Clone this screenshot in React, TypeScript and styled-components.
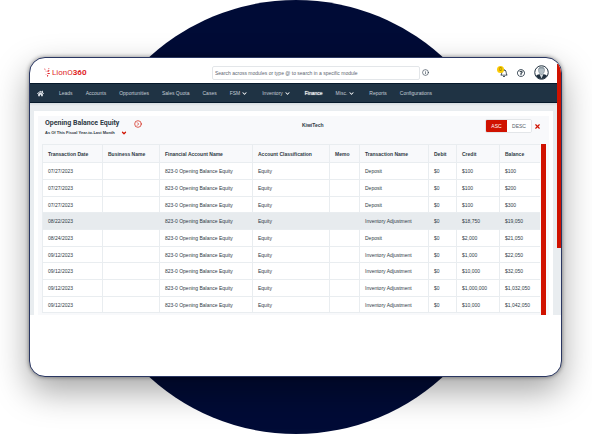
import React from 'react';
import styled, { createGlobalStyle, css } from 'styled-components';
import { FaHome, FaChevronDown, FaRegBell, FaRegQuestionCircle } from 'react-icons/fa';
import { ChevronDown, CircleChevronRight, Info, X } from 'lucide-react';

const red = '#d01200';
const ink = '#2f3a45';
const navy = '#1f3344';
const line = '#e9edf0';

const GlobalStyle = createGlobalStyle`
  *, *::before, *::after { box-sizing: border-box; }
  body {
    margin: 0;
    background: #fff;
    color: ${ink};
    font-family: "Liberation Sans", Arial, sans-serif;
    font-size: 5px;
    line-height: 6px;
  }
  button, input { font: inherit; color: inherit; margin: 0; padding: 0; border: 0; background: none; }
  button { cursor: pointer; }
  a { color: inherit; text-decoration: none; }
  svg { display: block; flex: none; }
`;

const Stage = styled.div`
  position: relative;
  display: flex;
  min-height: 100vh;
  padding: 57px 30px 57px 29px;
  overflow: hidden;

  &::before {
    content: '';
    position: absolute;
    top: 0;
    left: 50%;
    height: 100%;
    aspect-ratio: 1;
    border-radius: 50%;
    background: #000b36;
    transform: translateX(-50%);
  }
`;

const Window = styled.div`
  position: relative;
  flex: 1;
  min-width: 0;
  background: #fff;
  border: 1px solid #2a3762;
  border-radius: 16px;
  overflow: hidden;
  box-shadow: 0 0 4px rgba(0, 0, 0, 0.45), 0 14px 34px rgba(0, 0, 0, 0.36);
`;

const Screen = styled.div`
  display: flex;
`;

const Page = styled.div`
  flex: 1;
  min-width: 0;
`;

const PageTrack = styled.div`
  width: 4px;
  padding: 6px 0 67px;
  display: flex;
  background: linear-gradient(#fff 50%, ${line} 50%);
`;

const PageThumb = styled.div`
  flex: 1;
  background: ${red};
`;

const Header = styled.header`
  display: grid;
  grid-template-columns: 182fr 208fr 137fr;
  align-items: center;
  height: 25px;
  padding-top: 4px;
`;

const Logo = styled.a`
  display: flex;
  align-items: center;
  gap: 2px;
  padding-left: 14px;
  color: #e01f26;
  font-family: Roboto, sans-serif;
  font-size: 8px;
  line-height: 10px;

  b { font-weight: 700; }
`;

const SearchInput = styled.input`
  width: 100%;
  height: 14px;
  padding: 0 2px;
  border: 1px solid #e3e6e9;
  border-radius: 2px;
  background: #fff;

  &::placeholder { color: #5c6670; opacity: 1; }
`;

const HeaderTools = styled.div`
  display: flex;
  align-items: center;
  padding: 0 8px 0 2px;
`;

const IconButton = styled.button<{ $color?: string }>`
  position: relative;
  display: flex;
  flex: none;
  color: ${({ $color }) => $color ?? '#20303f'};
`;

const Account = styled.div`
  display: flex;
  align-items: center;
  gap: 9px;
  margin-left: auto;
`;

const Badge = styled.span`
  position: absolute;
  top: -3px;
  left: -3px;
  width: 7px;
  height: 7px;
  border-radius: 50%;
  background: #fbcb04;
  color: #7d6500;
  text-align: center;
  line-height: 7px;
`;

const Nav = styled.nav`
  display: flex;
  align-items: center;
  gap: 13px;
  height: 20px;
  padding: 0 7px;
  background: ${navy};
  border-top: 1px solid #05182a;
  border-bottom: 1px solid #05182a;
  color: #c3ccd4;
  white-space: nowrap;
`;

const navItem = css`
  display: flex;
  align-items: center;
`;

const NavLink = styled.a`
  ${navItem}

  &[aria-current] { color: #fff; text-shadow: 0 0 1px #fff; }
`;

const HomeLink = styled(NavLink)`
  margin-right: 2px;
  color: #dfe5ea;
`;

const NavMenu = styled.button`
  ${navItem}
  gap: 2px;
  margin-right: 2px;

  svg { color: #fff; }
`;

const Body = styled.main`
  padding: 8px 4px 0;
  background: linear-gradient(#d5dbdf, ${line} 3px);
`;

const Card = styled.section`
  padding: 5px 4px 0;
  background: #fff;
`;

const Report = styled.div`
  padding: 2px 3px 0 4px;
  background: #f8f9fb;
`;

const ReportHead = styled.div`
  display: grid;
  grid-template-columns: 13fr auto 11fr;
  align-items: start;
  height: 26px;
  padding: 1px 5px 0 3px;
`;

const Titles = styled.div`
  display: flex;
  flex-direction: column;
  gap: 2px;
`;

const TitleRow = styled.div`
  display: flex;
  align-items: center;
  gap: 15px;
`;

const Title = styled.h1`
  margin: 0;
  font-family: Roboto, sans-serif;
  font-size: 7px;
  line-height: 9px;
  font-weight: 700;
`;

const Period = styled.button`
  display: flex;
  align-items: center;
  gap: 6px;
  font-size: 4px;
  line-height: 6px;
  font-weight: 700;
`;

const Company = styled.strong`
  padding-top: 2px;
  line-height: 8px;
`;

const Controls = styled.div`
  display: flex;
  align-items: center;
  justify-content: flex-end;
  gap: 2px;
`;

const SortGroup = styled.div`
  display: flex;
  border: 1px solid #e3e6e9;
  border-radius: 2px;
  overflow: hidden;
`;

const SortButton = styled.button`
  width: 24px;
  height: 12px;
  background: #fff;
  color: #56616b;

  &[aria-pressed='true'] {
    width: 21px;
    background: ${red};
    color: #fff;
  }
`;

const TableArea = styled.div`
  display: flex;
  gap: 1px;
`;

const TableThumb = styled.div`
  width: 5px;
  background: ${red};
`;

const Table = styled.table`
  flex: 1;
  min-width: 0;
  table-layout: fixed;
  border-collapse: separate;
  border-spacing: 0;
  margin-bottom: 2px;
  white-space: nowrap;

  th, td {
    padding: 0 0 0 5px;
    border-right: 1px solid ${line};
    border-bottom: 1px solid ${line};
    text-align: left;
  }
  th:first-child, td:first-child { border-left: 1px solid ${line}; }
  th:last-child, td:last-child { border-right: 0; }
  th { height: 19px; border-top: 1px solid ${line}; font-weight: 700; }
`;

const Row = styled.tr<{ $active?: boolean }>`
  background: ${({ $active }) => ($active ? '#e7ebee' : '#fff')};

  td { height: 17px; }
  &:nth-child(3n) td { height: 16px; }
  ${({ $active }) => $active && css`td { border-right-color: #e7ebee; }`}
`;

const Col = styled.col<{ $width: number }>`
  width: ${({ $width }) => $width}px;
`;

const navItems = [
  { label: 'Leads' },
  { label: 'Accounts' },
  { label: 'Opportunities' },
  { label: 'Sales Quota' },
  { label: 'Cases' },
  { label: 'FSM', menu: true },
  { label: 'Inventory', menu: true },
  { label: 'Finance', current: true },
  { label: 'Misc.', menu: true },
  { label: 'Reports' },
  { label: 'Configurations' },
];

const columns = [
  { label: 'Transaction Date', width: 61 },
  { label: 'Business Name', width: 57 },
  { label: 'Financial Account Name', width: 93 },
  { label: 'Account Classification', width: 77 },
  { label: 'Memo', width: 30 },
  { label: 'Transaction Name', width: 69 },
  { label: 'Debit', width: 28 },
  { label: 'Credit', width: 43 },
  { label: 'Balance', width: 40 },
];

const entries = [
  { date: '07/27/2023', name: 'Deposit', credit: '$100', balance: '$100' },
  { date: '07/27/2023', name: 'Deposit', credit: '$100', balance: '$200' },
  { date: '07/27/2023', name: 'Deposit', credit: '$100', balance: '$300' },
  { date: '08/22/2023', name: 'Inventory Adjustment', credit: '$18,750', balance: '$19,050', active: true },
  { date: '08/24/2023', name: 'Deposit', credit: '$2,000', balance: '$21,050' },
  { date: '09/12/2023', name: 'Inventory Adjustment', credit: '$1,000', balance: '$22,050' },
  { date: '09/12/2023', name: 'Inventory Adjustment', credit: '$10,000', balance: '$32,050' },
  { date: '09/12/2023', name: 'Inventory Adjustment', credit: '$1,000,000', balance: '$1,032,050' },
  { date: '09/12/2023', name: 'Inventory Adjustment', credit: '$10,000', balance: '$1,042,050' },
];

const LogoMark = () => (
  <svg width="6" height="9" viewBox="0 0 12 18" fill="currentColor" aria-hidden="true">
    <path d="M0 1l3 1-1 2zM3 5l2 1-1 2zM9 0l2 1-2 2zM7 5l4-1-1 3-3 1zM7 10h5l-1 2H7zM3 12l2 1-1 1zM6 14l3 1-3 3z" />
  </svg>
);

const Avatar = () => (
  <svg width="15" height="15" viewBox="0 0 30 30" aria-hidden="true">
    <circle cx="15" cy="15" r="13.5" fill="#fff" stroke="#20303f" strokeWidth="2" />
    <path d="M4 22c1-2 4-3 7-4l4 4 4-4c3 1 6 2 7 4A13 13 0 0 1 4 22z" fill="#20303f" />
    <path d="M11 18l4 9 4-9z" fill="#d3dade" />
    <path d="M9 10c0-8 12-8 12 0 0 5-3 9-6 9s-6-4-6-9z" fill="#b3bfc6" stroke="#6a7883" strokeWidth="1" />
    <path d="M9 10c-1-9 13-9 12 0-2-4-10-4-12 0z" fill="#8c99a2" />
  </svg>
);

export default function App() {
  return (
    <>
      <GlobalStyle />
      <Stage>
        <Window>
          <Screen>
            <Page>
              <Header>
                <Logo href="#" aria-label="LionO360">
                  <LogoMark />
                  <span>LionO<b>360</b></span>
                </Logo>
                <SearchInput
                  type="search"
                  aria-label="Search"
                  placeholder="Search across modules or type @ to search in a specific module"
                />
                <HeaderTools>
                  <IconButton aria-label="Search help"><Info size={7} /></IconButton>
                  <Account>
                    <IconButton aria-label="Notifications">
                      <FaRegBell size={8} />
                      <Badge>0</Badge>
                    </IconButton>
                    <IconButton aria-label="Help"><FaRegQuestionCircle size={8} /></IconButton>
                    <IconButton aria-label="Account"><Avatar /></IconButton>
                  </Account>
                </HeaderTools>
              </Header>

              <Nav>
                <HomeLink href="#" aria-label="Home"><FaHome size={7} /></HomeLink>
                {navItems.map(({ label, menu, current }) =>
                  menu ? (
                    <NavMenu key={label} aria-haspopup="menu">
                      {label}
                      <FaChevronDown size={5} />
                    </NavMenu>
                  ) : (
                    <NavLink key={label} href="#" aria-current={current ? 'page' : undefined}>
                      {label}
                    </NavLink>
                  ),
                )}
              </Nav>

              <Body>
                <Card>
                  <Report>
                    <ReportHead>
                      <Titles>
                        <TitleRow>
                          <Title>Opening Balance Equity</Title>
                          <IconButton $color={red} aria-label="Open details">
                            <CircleChevronRight size={8} />
                          </IconButton>
                        </TitleRow>
                        <Period aria-haspopup="listbox">
                          As Of This Fiscal Year-to-Last Month
                          <ChevronDown size={6} strokeWidth={5} color={red} />
                        </Period>
                      </Titles>
                      <Company>KiwiTech</Company>
                      <Controls>
                        <SortGroup role="group" aria-label="Sort order">
                          <SortButton aria-pressed="true">ASC</SortButton>
                          <SortButton aria-pressed="false">DESC</SortButton>
                        </SortGroup>
                        <IconButton aria-label="Close"><X size={7} strokeWidth={4} color={red} /></IconButton>
                      </Controls>
                    </ReportHead>
                    <TableArea>
                      <Table>
                        <colgroup>
                          {columns.map(({ label, width }) => <Col key={label} $width={width} />)}
                        </colgroup>
                        <thead>
                          <tr>
                            {columns.map(({ label }) => <th key={label} scope="col">{label}</th>)}
                          </tr>
                        </thead>
                        <tbody>
                          {entries.map((entry, index) => (
                            <Row key={index} $active={entry.active}>
                              <td>{entry.date}</td>
                              <td />
                              <td>823-0 Opening Balance Equity</td>
                              <td>Equity</td>
                              <td />
                              <td>{entry.name}</td>
                              <td>$0</td>
                              <td>{entry.credit}</td>
                              <td>{entry.balance}</td>
                            </Row>
                          ))}
                        </tbody>
                      </Table>
                      <TableThumb />
                    </TableArea>
                  </Report>
                </Card>
              </Body>
            </Page>
            <PageTrack>
              <PageThumb />
            </PageTrack>
          </Screen>
        </Window>
      </Stage>
    </>
  );
}
